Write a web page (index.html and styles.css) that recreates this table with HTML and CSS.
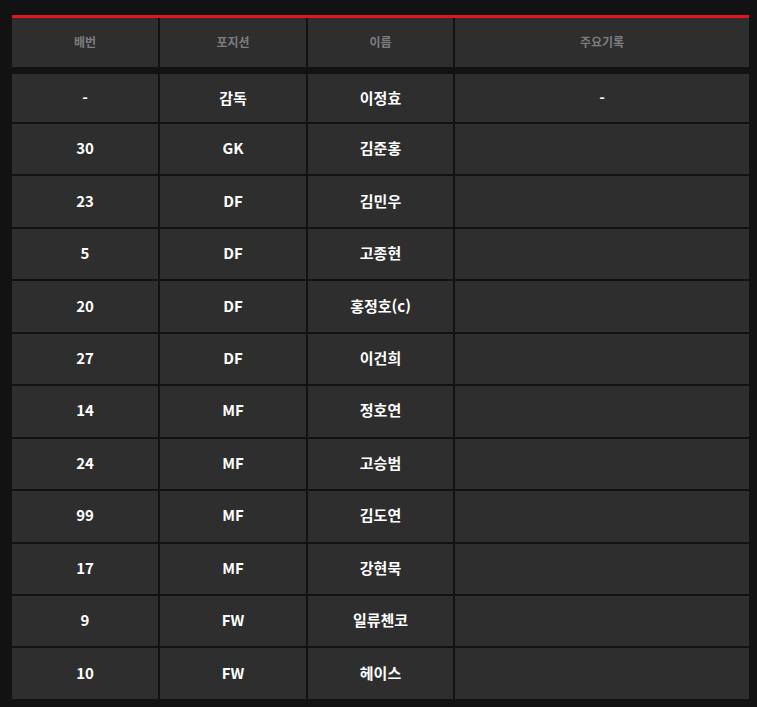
FILE: index.html
```html
<!DOCTYPE html>
<html lang="ko">
<head>
<meta charset="utf-8">
<link rel="stylesheet" href="styles.css">
</head>
<body>
<div class="wrap">
  <div class="roster">
    <div class="row head">
      <div class="cell">배번</div>
      <div class="cell">포지션</div>
      <div class="cell">이름</div>
      <div class="cell">주요기록</div>
    </div>
    <div class="body">
      <div class="row first"><div class="cell">-</div><div class="cell">감독</div><div class="cell">이정효</div><div class="cell">-</div></div>
      <div class="row"><div class="cell">30</div><div class="cell">GK</div><div class="cell">김준홍</div><div class="cell"></div></div>
      <div class="row"><div class="cell">23</div><div class="cell">DF</div><div class="cell">김민우</div><div class="cell"></div></div>
      <div class="row"><div class="cell">5</div><div class="cell">DF</div><div class="cell">고종현</div><div class="cell"></div></div>
      <div class="row"><div class="cell">20</div><div class="cell">DF</div><div class="cell">홍정호(c)</div><div class="cell"></div></div>
      <div class="row"><div class="cell">27</div><div class="cell">DF</div><div class="cell">이건희</div><div class="cell"></div></div>
      <div class="row"><div class="cell">14</div><div class="cell">MF</div><div class="cell">정호연</div><div class="cell"></div></div>
      <div class="row"><div class="cell">24</div><div class="cell">MF</div><div class="cell">고승범</div><div class="cell"></div></div>
      <div class="row"><div class="cell">99</div><div class="cell">MF</div><div class="cell">김도연</div><div class="cell"></div></div>
      <div class="row"><div class="cell">17</div><div class="cell">MF</div><div class="cell">강현묵</div><div class="cell"></div></div>
      <div class="row"><div class="cell">9</div><div class="cell">FW</div><div class="cell">일류첸코</div><div class="cell"></div></div>
      <div class="row"><div class="cell">10</div><div class="cell">FW</div><div class="cell">헤이스</div><div class="cell"></div></div>
    </div>
  </div>
</div>
</body>
</html>
```

FILE: styles.css
```css
html, body {
  margin: 0;
  padding: 0;
  background: #121212;
}
body {
  font-family: "Noto Sans CJK KR", "Noto Sans", sans-serif;
}
.wrap {
  padding: 15px 8px 0 12px;
}
.roster {
  width: 737px;
  border-top: 3px solid #e3141f;
}
.row {
  display: grid;
  grid-template-columns: 146px 146px 145px 1fr;
  column-gap: 2px;
}
.cell {
  background: #2e2e2e;
  display: flex;
  align-items: center;
  justify-content: center;
  color: #fff;
  font-weight: 700;
  font-size: 15px;
  height: 50.45px;
  padding-bottom: 3px;
  box-sizing: border-box;
}
.head .cell {
  height: 49px;
  color: #7d7d7d;
  font-weight: 700;
  font-size: 12px;
  padding-bottom: 2px;
}
.body {
  margin-top: 7px;
  display: flex;
  flex-direction: column;
  row-gap: 2px;
}
.first .cell {
  height: 48px;
  padding-bottom: 2px;
}
```
